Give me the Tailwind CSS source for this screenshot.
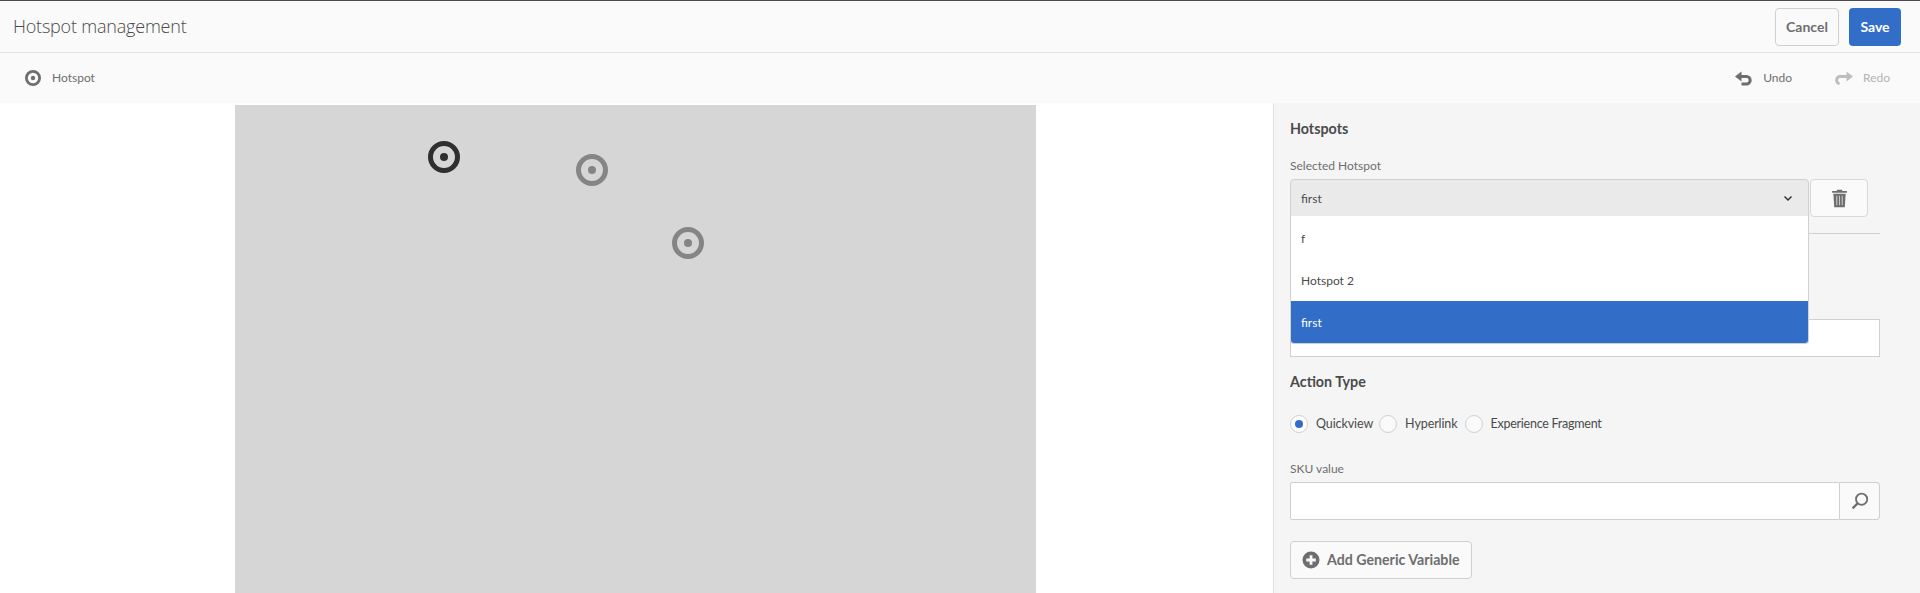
<!DOCTYPE html>
<html lang="en">
<head>
  <meta charset="UTF-8" />
  <title>Hotspot management</title>
  <script src="https://cdn.jsdelivr.net/npm/@tailwindcss/browser@4"></script>
</head>
<body class="h-[593px] overflow-hidden bg-white font-['Lato','Noto_Sans',sans-serif] text-[#4b4b4b]">
  <!-- title bar -->
  <header class="h-[53px] border-t border-t-[#4b4b4b] border-b border-b-[#e1e1e1] bg-[#fafafa] flex items-center justify-between pl-[13px] pr-[19px]">
    <h1 class="font-['Open_Sans',sans-serif] text-[18px] font-light tracking-[-0.2px] text-[#4b4b4b]">Hotspot management</h1>
    <div class="flex gap-[10px]">
      <button class="h-[38px] w-[64px] rounded-[4px] border border-[#d0d0d0] bg-[#fafafa] text-[14px] font-bold text-[#6e6e6e]">Cancel</button>
      <button class="h-[38px] w-[52px] rounded-[4px] bg-[#326ec8] text-[14px] font-bold text-white">Save</button>
    </div>
  </header>

  <!-- toolbar -->
  <div class="h-[50px] bg-[#fafafa] flex items-center justify-between pl-[25px] pr-[30px] text-[12px] text-[#6e6e6e]">
    <div class="flex items-center gap-[11px]">
      <svg width="16" height="16" viewBox="0 0 16 16"><circle cx="8" cy="8" r="6.6" fill="none" stroke="#6e6e6e" stroke-width="2.8"/><circle cx="8" cy="8" r="2.2" fill="#6e6e6e"/></svg>
      <span>Hotspot</span>
    </div>
    <div class="flex items-center">
      <svg width="19" height="16" viewBox="0 0 18 16" fill="none" stroke="#6e6e6e" stroke-width="3"><path d="M3 6.5h9a3.7 3.7 0 0 1 0 7.4H7"/><path d="M0.5 6.5 7 1.6v9.8z" fill="#6e6e6e" stroke="none"/></svg>
      <span class="ml-[10px] mr-[43px]">Undo</span>
      <svg width="19" height="16" viewBox="0 0 18 16" fill="none" stroke="#bdbdbd" stroke-width="3"><path d="M15 6.5H6a3.7 3.7 0 0 0-2 7.4"/><path d="M17.5 6.5 11 1.6v9.8z" fill="#bdbdbd" stroke="none"/></svg>
      <span class="ml-[9px] text-[#b3b3b3]">Redo</span>
    </div>
  </div>

  <main class="flex h-[490px]">
    <!-- canvas -->
    <section class="flex-1 pt-[2px] pl-[235px]">
      <div class="relative h-full w-[801px] bg-[#d6d6d6]">
        <svg class="absolute left-[193px] top-[36px]" width="32" height="32" viewBox="0 0 32 32"><circle cx="16" cy="16" r="13.5" fill="none" stroke="#2f2f2f" stroke-width="5"/><circle cx="16" cy="16" r="4" fill="#2f2f2f"/></svg>
        <svg class="absolute left-[341px] top-[49px]" width="32" height="32" viewBox="0 0 32 32"><circle cx="16" cy="16" r="13.5" fill="none" stroke="#858585" stroke-width="5"/><circle cx="16" cy="16" r="4" fill="#858585"/></svg>
        <svg class="absolute left-[437px] top-[122px]" width="32" height="32" viewBox="0 0 32 32"><circle cx="16" cy="16" r="13.5" fill="none" stroke="#858585" stroke-width="5"/><circle cx="16" cy="16" r="4" fill="#858585"/></svg>
      </div>
    </section>

    <!-- side panel -->
    <aside class="w-[647px] border-l border-[#e1e1e1] bg-[#f5f5f5] pl-[16px] pr-[40px] pt-[17px]">
      <h2 class="text-[14.3px] leading-[18px] font-bold text-[#4b4b4b]">Hotspots</h2>
      <label class="mt-[20px] block text-[12px] leading-[16px] text-[#6e6e6e]">Selected Hotspot</label>
      <div class="mt-[5px] flex">
        <div class="relative mr-[1px] w-[519px]">
          <div class="flex h-[38px] items-center justify-between rounded-t-[4px] border border-[#d0d0d0] bg-[#eaeaea] pl-[10px] pr-[15px] text-[12px] text-[#4b4b4b]">
            <span class="relative top-[1px]">first</span>
            <svg width="10" height="7" viewBox="0 0 10 7" fill="none" stroke="#33333f" stroke-width="1.5"><path d="M1.5 1.5 5 5l3.5-3.5"/></svg>
          </div>
          <ul class="absolute left-0 top-[37px] z-10 w-full rounded-b-[4px] border border-t-0 border-[#d0d0d0] bg-white pt-[1px] text-[12px] text-[#4b4b4b]">
            <li class="flex h-[42px] items-center pl-[10px] pt-[2px]">f</li>
            <li class="flex h-[42px] items-center pl-[10px] pt-[2px]">Hotspot 2</li>
            <li class="flex h-[42px] items-center rounded-b-[3px] bg-[#326ec8] pl-[10px] pt-[1px] text-white">first</li>
          </ul>
        </div>
        <button class="flex h-[38px] w-[58px] items-center justify-center rounded-[4px] border border-[#d8d8d8] bg-[#fafafa]">
          <svg width="17" height="19" viewBox="0 0 16 18"><path d="M5.5 2V.8h5V2H15v1.6H1V2z" fill="#6e6e6e"/><path d="M2.2 4.6h11.6L13 17.4H3z" fill="#6e6e6e"/><path d="M5.4 6.5v9M8 6.5v9M10.6 6.5v9" stroke="#c9c9c9" stroke-width="1"/></svg>
        </button>
      </div>
      <hr class="mt-[16px] border-[#d0d0d0]" />
      <input class="mt-[85px] block h-[38px] w-full border border-[#d0d0d0] bg-white" />

      <h2 class="mt-[16px] text-[14.3px] leading-[18px] font-bold text-[#4b4b4b]">Action Type</h2>
      <div class="mt-[23px] flex h-[20px] items-center text-[12.5px] text-[#4b4b4b]">
        <span class="flex size-[18px] items-center justify-center rounded-full border border-[#d0d0d0] bg-white"><span class="size-[8px] rounded-full bg-[#326ec8]"></span></span>
        <span class="ml-[8px] tracking-[-0.1px]">Quickview</span>
        <span class="ml-[6px] size-[18px] rounded-full border border-[#d0d0d0] bg-[#fafafa]"></span>
        <span class="ml-[8px] tracking-[-0.1px]">Hyperlink</span>
        <span class="ml-[8px] size-[18px] rounded-full border border-[#d0d0d0] bg-[#fafafa]"></span>
        <span class="ml-[7px] tracking-[-0.25px]">Experience Fragment</span>
      </div>
      <label class="mt-[27px] block text-[12px] leading-[16px] text-[#6e6e6e]">SKU value</label>
      <div class="mt-[5px] flex h-[38px]">
        <input class="h-full flex-1 rounded-l-[2px] border border-[#d0d0d0] bg-white" />
        <button class="flex h-full w-[40px] items-center justify-center rounded-r-[4px] border border-l-0 border-[#d0d0d0] bg-[#fafafa]">
          <svg width="18" height="18" viewBox="0 0 18 18" fill="none" stroke="#6e6e6e"><circle cx="10.6" cy="7.2" r="5.6" stroke-width="1.8"/><path d="M6.6 11.4 1.6 16.4" stroke-width="2.2"/></svg>
        </button>
      </div>
      <button class="mt-[21px] flex h-[38px] w-[182px] items-center rounded-[4px] border border-[#d0d0d0] bg-[#fafafa] pl-[11px] text-[14.2px] font-bold text-[#6e6e6e]">
        <svg width="18" height="18" viewBox="0 0 18 18"><circle cx="9" cy="9" r="8.5" fill="#6e6e6e"/><path d="M9 4.2v9.6M4.2 9h9.6" stroke="#fafafa" stroke-width="2.8"/></svg>
        <span class="ml-[7px]">Add Generic Variable</span>
      </button>
    </aside>
  </main>
</body>
</html>
